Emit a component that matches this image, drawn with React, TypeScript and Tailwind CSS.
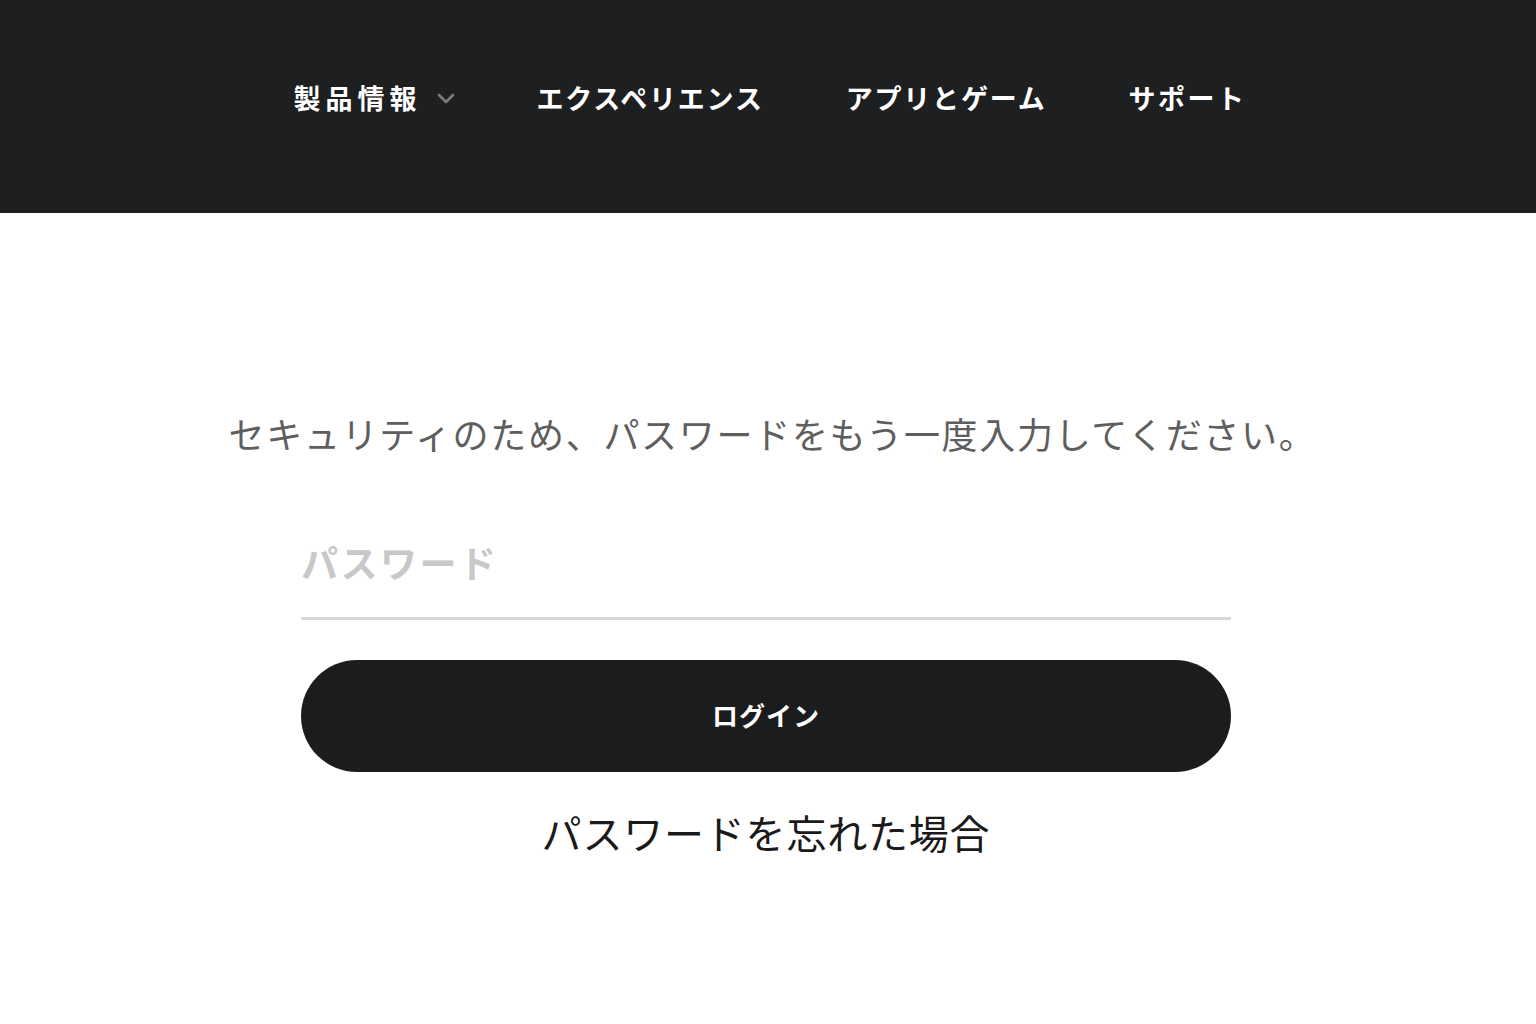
import React from "react";

const font = { fontFamily: '"Noto Sans CJK JP", "Noto Sans", sans-serif' };

function Chevron() {
  return (
    <svg width="18" height="11" viewBox="0 0 18 11" className="ml-[15px]">
      <path d="M2 2 L9 9 L16 2" fill="none" stroke="#7c7c7c" strokeWidth="2.6" strokeLinecap="round" strokeLinejoin="round" />
    </svg>
  );
}

export default function App() {
  return (
    <div className="min-h-[1024px] w-full bg-white" style={font}>
      <header className="h-[213px] w-full bg-[#1e1f21]">
        <nav className="flex items-center justify-center gap-[82px] pt-[80px] pl-[4px]">
          <div className="flex items-center h-[36px]">
            <span className="text-[27px] font-bold text-white tracking-[5px] leading-[36px]">製品情報</span>
            <Chevron />
          </div>
          <span className="text-[27px] font-bold text-white tracking-[1.8px] leading-[36px]">エクスペリエンス</span>
          <span className="text-[27px] font-bold text-white tracking-[1.8px] leading-[36px]">アプリとゲーム</span>
          <span className="text-[27px] font-bold text-white tracking-[2.5px] leading-[36px]">サポート</span>
        </nav>
      </header>
      <main className="flex flex-col items-center pt-[196px]">
        <p className="text-[36px] leading-[48px] text-[#5e5e5e] tracking-[1.7px] whitespace-nowrap ml-[9px]">
          セキュリティのため、パスワードをもう一度入力してください。
        </p>
        <div className="w-[930px] mt-[52px] mr-[4px]">
          <input
            type="password"
            placeholder="パスワード"
            className="w-full h-[111px] border-b-[3px] border-[#d9d9d9] bg-transparent outline-none text-[37px] font-semibold tracking-[2.5px] placeholder:text-[#c8c8c8] px-0 pb-[2px]"
            style={font}
          />
          <button className="mt-[40px] w-full h-[112px] rounded-full bg-[#1b1c1e] text-white text-[26px] font-bold tracking-[1px] pb-[4px]" style={font}>
            ログイン
          </button>
          <div className="mt-[36px] text-center">
            <a className="text-[40px] leading-[48px] text-[#1a1a1a] tracking-[0.8px]">パスワードを忘れた場合</a>
          </div>
        </div>
      </main>
    </div>
  );
}
